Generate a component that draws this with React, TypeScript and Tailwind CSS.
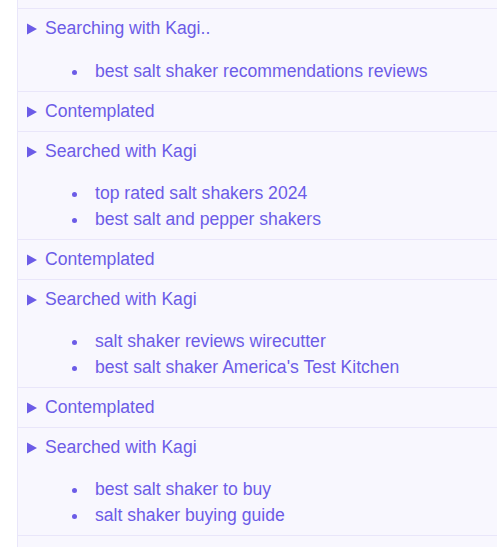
const steps: { title: string; items?: string[] }[] = [
  { title: "Searching with Kagi..", items: ["best salt shaker recommendations reviews"] },
  { title: "Contemplated" },
  { title: "Searched with Kagi", items: ["top rated salt shakers 2024", "best salt and pepper shakers"] },
  { title: "Contemplated" },
  { title: "Searched with Kagi", items: ["salt shaker reviews wirecutter", "best salt shaker America's Test Kitchen"] },
  { title: "Contemplated" },
  { title: "Searched with Kagi", items: ["best salt shaker to buy", "salt shaker buying guide"] },
];

const Step = ({ title, items, first }: { title: string; items?: string[]; first?: boolean }) => {
  return (
    <div className="border-t border-[#e9e6fa]">
      <div className="flex items-center h-[39px] pl-[9px] gap-[8px]">
        <svg width="10" height="12" viewBox="0 0 10 12" className="shrink-0">
          <polygon points="0,0.5 10,6 0,11.5" fill="#6c5ce7" />
        </svg>
        <span>{title}</span>
      </div>
      {items && (
        <ul className={first ? "pt-[10px] pb-[7px] pl-[77px]" : "pt-[9px] pb-[7px] pl-[77px]"}>
          {items.map((it) => (
            <li key={it} className="relative leading-[26px]">
              <span className="absolute -left-[23px] top-[12px] size-[5px] rounded-full bg-[#6c5ce7]" />
              {it}
            </li>
          ))}
        </ul>
      )}
    </div>
  );
};

export default function App() {
  return (
    <div className="h-[547px] w-[497px] bg-white pl-[17px] overflow-hidden font-['Liberation_Sans',Arial,sans-serif] text-[17.6px] text-[#6c5ce7]">
      <div className="h-full border-l border-[#e9e6fa] bg-[#f8f7fe] pt-2">
        {steps.map((s, i) => (
          <Step key={i} title={s.title} items={s.items} first={i === 0} />
        ))}
        <div className="border-t border-[#e9e6fa]" />
      </div>
    </div>
  );
}
